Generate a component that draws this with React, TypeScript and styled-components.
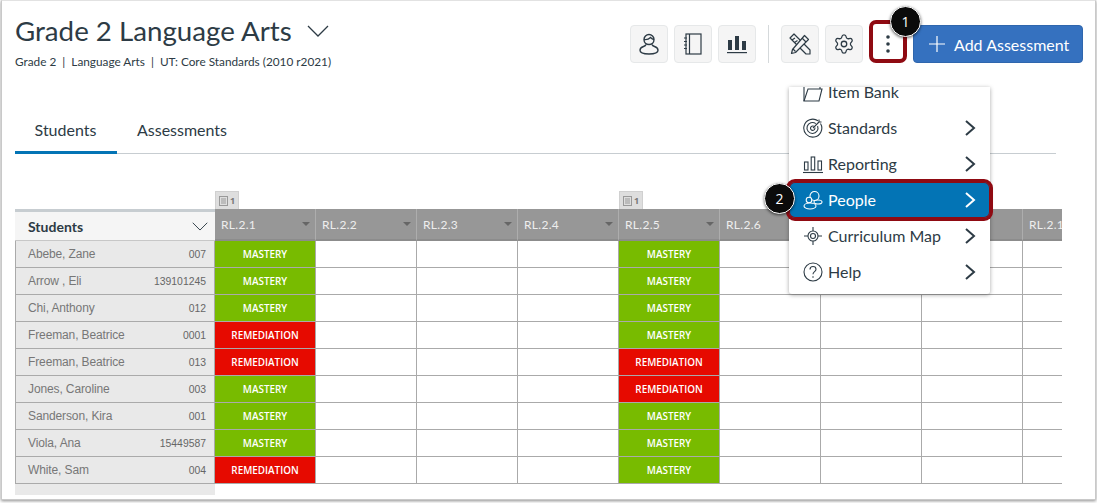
import React from 'react';
import styled, { createGlobalStyle } from 'styled-components';
import { Settings } from 'lucide-react';

const GlobalStyle = createGlobalStyle`
  html, body {
    margin: 0;
    padding: 0;
    background: #fff;
    overflow: hidden;
  }
  body {
    width: 1097px;
    height: 503px;
    font-family: Lato, "Liberation Sans", sans-serif;
  }
`;

const Frame = styled.div`
  position: relative;
  box-sizing: border-box;
  width: 1095px;
  height: 500px;
  margin-left: 1px;
  border: 1px solid #c9c9c9;
  border-top-color: #e2e2e2;
  box-shadow: 0 1px 3px rgba(0, 0, 0, 0.45);
  padding: 0 0 0 13px;
  background: #fff;
  overflow: hidden;
`;

const Header = styled.header`
  display: flex;
  justify-content: space-between;
  align-items: flex-start;
  height: 87px;
`;

const TitleBlock = styled.div`
  padding-top: 13px;
`;

const TitleRow = styled.div`
  display: flex;
  align-items: center;
  gap: 15px;
  height: 34px;
`;

const Title = styled.h1`
  margin: 0;
  font-size: 27.7px;
  font-weight: 400;
  color: #2d3b45;
  line-height: 34px;
`;

const Subtitle = styled.div`
  margin-top: 6px;
  font-size: 11.8px;
  line-height: 15px;
  color: #2d3b45;
  white-space: pre;
`;

const Toolbar = styled.div`
  display: flex;
  align-items: center;
  gap: 6px;
  padding: 24px 12px 0 0;
`;

const IconButton = styled.div`
  box-sizing: border-box;
  width: 38px;
  height: 38px;
  display: flex;
  align-items: center;
  justify-content: center;
  background: #f5f5f5;
  border: 1px solid #e6e8e9;
  border-radius: 4px;
  color: #2d3b45;
`;

const Divider = styled.div`
  width: 1px;
  height: 38px;
  background: #d5d9db;
  margin: 0 6px;
`;

const KebabButton = styled.div`
  box-sizing: border-box;
  width: 38px;
  height: 43px;
  margin-top: -5px;
  display: flex;
  align-items: center;
  justify-content: center;
  padding-top: 5px;
  border: 4px solid #8f0a12;
  border-radius: 7px;
  color: #2d3b45;
`;

const AddButton = styled.div`
  box-sizing: border-box;
  width: 170px;
  height: 38px;
  display: flex;
  align-items: center;
  gap: 9px;
  padding-left: 15px;
  background: #3571bf;
  border: 1px solid #2f66ad;
  border-radius: 4px;
  color: #fff;
  font-size: 16px;
`;

const Tabs = styled.nav`
  display: flex;
  width: 1041px;
  height: 66px;
  box-sizing: border-box;
  border-bottom: 1px solid #c7cdd1;
  align-items: flex-end;
`;

const Tab = styled.div<{ $active?: boolean }>`
  box-sizing: border-box;
  height: 38px;
  width: ${(p) => (p.$active ? '102px' : '131px')};
  margin-bottom: -1px;
  text-align: center;
  font-size: 16px;
  line-height: 22px;
  padding: 3px 1px 0 0;
  color: #2d3b45;
  border-bottom: 3px solid ${(p) => (p.$active ? '#0374b5' : 'transparent')};
`;

const Gradebook = styled.section`
  width: 1047px;
  margin-top: 37px;
  overflow: hidden;
`;

const TagRow = styled.div`
  display: flex;
  height: 18px;
  padding-left: 200px;
`;

const TagSlot = styled.div`
  width: 101px;
  flex: none;
  box-sizing: border-box;
`;

const Tag = styled.div`
  box-sizing: border-box;
  width: 24px;
  height: 18px;
  display: flex;
  align-items: center;
  gap: 2px;
  padding-left: 3px;
  background: #dedede;
  border: 1px solid #d0d0d0;
  border-bottom: 0;
  font-family: "Open Sans", sans-serif;
  font-size: 9px;
  font-weight: 700;
  color: #777;
`;

const Row = styled.div`
  display: flex;
  width: 1100px;
`;

const StudentsHead = styled.div`
  box-sizing: border-box;
  width: 200px;
  height: 32px;
  flex: none;
  display: flex;
  align-items: center;
  justify-content: space-between;
  padding: 1px 7px 0 13px;
  background: #f5f5f5;
  border-top: 3px solid #c7cdd1;
  border-bottom: 1px solid #c7c7c7;
  font-size: 14px;
  font-weight: 700;
  color: #2d3b45;
`;

const ColumnHead = styled.div`
  box-sizing: border-box;
  width: 101px;
  height: 32px;
  flex: none;
  display: flex;
  align-items: center;
  justify-content: space-between;
  padding: 1px 5px 1px 6px;
  background: #979797;
  border-right: 1px solid #adadad;
  border-bottom: 2px solid #8c8c8c;
  font-size: 12px;
  letter-spacing: 0.3px;
  color: #eee;
  white-space: nowrap;
`;

const Caret = styled.span`
  width: 0;
  height: 0;
  border-left: 4px solid transparent;
  border-right: 4px solid transparent;
  border-top: 4px solid #666;
`;

const StudentCell = styled.div`
  box-sizing: border-box;
  width: 200px;
  height: 27px;
  flex: none;
  display: flex;
  align-items: center;
  justify-content: space-between;
  padding: 0 8px 0 12px;
  background: #e9e9e9;
  border-left: 1px solid #aaa;
  border-bottom: 1px solid #aaa;
  border-right: 1px solid #aaa;
  font-family: "Liberation Sans", Arial, sans-serif;
  font-size: 12px;
  letter-spacing: -0.12px;
  color: #777;
`;

const StudentId = styled.span`
  color: #666;
  font-size: 10.4px;
  letter-spacing: 0;
`;

const ScoreCell = styled.div<{ $status?: 'MASTERY' | 'REMEDIATION' }>`
  box-sizing: border-box;
  width: 101px;
  height: 27px;
  flex: none;
  display: flex;
  align-items: center;
  justify-content: center;
  border-right: 1px solid #aaa;
  border-bottom: 1px solid #aaa;
  font-family: "Open Sans", sans-serif;
  font-size: 9.9px;
  font-weight: 600;
  color: #fff;
  background: ${(p) =>
    p.$status === 'MASTERY' ? '#78bb00' : p.$status === 'REMEDIATION' ? '#e60a00' : '#fff'};
`;

const Filler = styled.div`
  width: 200px;
  height: 11px;
  background: #e9e9e9;
`;

const Menu = styled.div`
  position: absolute;
  left: 787px;
  top: 86px;
  width: 201px;
  background: #fff;
  box-shadow: 0 1px 4px rgba(0, 0, 0, 0.35);
  border-radius: 0 0 3px 3px;
  padding-bottom: 4px;
`;

const ClippedItem = styled.div`
  height: 23px;
  overflow: hidden;
`;

const MenuItem = styled.div<{ $selected?: boolean; $clipped?: boolean }>`
  position: relative;
  box-sizing: border-box;
  height: 36px;
  margin-top: ${(p) => (p.$clipped ? '-13px' : '0')};
  display: flex;
  align-items: center;
  gap: 5px;
  padding: 0 14px;
  font-size: 16px;
  color: ${(p) => (p.$selected ? '#fff' : '#2d3b45')};
  background: ${(p) => (p.$selected ? '#0374b5' : 'transparent')};
  border-radius: ${(p) => (p.$selected ? '6px' : '0')};
  box-shadow: ${(p) => (p.$selected ? '0 0 0 3px #8f0a12, inset 0 0 0 1px #8f0a12' : 'none')};
  z-index: ${(p) => (p.$selected ? 1 : 0)};
`;

const MenuLabel = styled.span`
  flex: 1;
  padding-bottom: 2px;
`;

const Badge = styled.div<{ $x: number; $y: number }>`
  position: absolute;
  left: ${(p) => p.$x}px;
  top: ${(p) => p.$y}px;
  box-sizing: border-box;
  width: 31px;
  height: 31px;
  display: flex;
  align-items: center;
  justify-content: center;
  border-radius: 50%;
  background: #0b0b0b;
  border: 1px solid #fff;
  box-shadow: 0 1px 3px rgba(0, 0, 0, 0.6);
  color: #fff;
  font-family: "Open Sans", sans-serif;
  font-size: 14px;
  z-index: 3;
`;

const ChevronDown = ({ size = 22 }: { size?: number }) => (
  <svg width={size} height={size * 0.55} viewBox="0 0 22 12" fill="none" stroke="#2d3b45" strokeWidth="1.3">
    <polyline points="1,1 11,11 21,1" />
  </svg>
);

const ChevronRight = () => (
  <svg width="12" height="16" viewBox="0 0 12 16" fill="none" stroke="currentColor" strokeWidth="2">
    <polyline points="2,1 10,8 2,15" />
  </svg>
);

const PersonIcon = () => (
  <svg width="20" height="22" viewBox="0 0 20 22" fill="none" stroke="currentColor" strokeWidth="1.4">
    <path d="M5 6.500a5 5 0 1 1 10 0c0 3-2.200 5-5 5s-5-2-5-5z" />
    <path d="M5 6.500c3 .5 5-.5 6.500-2 1 1 2.300 1.800 3.500 2" />
    <path d="M7 11.500c-.3 1-1 1.500-2.500 2C2.500 14.200 1 15.500 1 17.300 1 19.500 3.500 21 10 21s9-1.500 9-3.700c0-1.800-1.500-3.100-3.500-3.800-1.500-.5-2.200-1-2.500-2" />
  </svg>
);

const NotebookIcon = () => (
  <svg width="20" height="22" viewBox="0 0 20 22" fill="none" stroke="currentColor" strokeWidth="1.2">
    <rect x="3" y="1" width="15" height="20" />
    <line x1="6.500" y1="1" x2="6.500" y2="21" />
    <path d="M1 5h3M1 8.500h3M1 12h3M1 15.500h3" />
  </svg>
);

const BarsIcon = () => (
  <svg width="20" height="20" viewBox="0 0 20 20" fill="currentColor">
    <rect x="1" y="6" width="4" height="10" />
    <rect x="8" y="2" width="4" height="14" />
    <rect x="15" y="7" width="4" height="9" />
    <rect x="0" y="18" width="20" height="1.200" />
  </svg>
);

const ToolsIcon = () => (
  <svg width="22" height="22" viewBox="0 0 22 22" fill="none" stroke="currentColor" strokeWidth="1.200" strokeLinejoin="round">
    <path d="M1 5l4-4 16 16v4h-4z" />
    <path d="M3 7l3-2M5.500 9.500l3-2M8 12l3-2" />
    <path d="M15.500 2.500l4 4-13 13-4 1 1-4z" fill="#f5f5f5" />
    <path d="M13 5l4 4M4 16l2.500 2.500" />
  </svg>
);

const KebabIcon = () => (
  <svg width="6" height="20" viewBox="0 0 6 20" fill="currentColor">
    <circle cx="3" cy="3" r="1.800" />
    <circle cx="3" cy="10" r="1.800" />
    <circle cx="3" cy="17" r="1.800" />
  </svg>
);

const PlusIcon = () => (
  <svg width="16" height="16" viewBox="0 0 16 16" stroke="#fff" strokeWidth="1.200">
    <path d="M8 0v16M0 8h16" />
  </svg>
);

const NoteIcon = () => (
  <svg width="9" height="10" viewBox="0 0 9 10" fill="none" stroke="#999" strokeWidth="1">
    <rect x="0.500" y="0.500" width="8" height="9" />
    <path d="M2 3h5M2 5h5M2 7h5" />
  </svg>
);

const FolderIcon = () => (
  <svg width="20" height="20" viewBox="0 0 20 20" fill="none" stroke="currentColor" strokeWidth="1.100">
    <path d="M1 19V3h5l1-2h6l1 2h3v4" />
    <path d="M1 19h15l3-12H5z" />
  </svg>
);

const TargetIcon = () => (
  <svg width="20" height="20" viewBox="0 0 20 20" fill="none" stroke="currentColor" strokeWidth="1.100">
    <path d="M15 2.800A9 9 0 1 0 17.500 5.500" />
    <path d="M12.800 5.600A5.500 5.500 0 1 0 14.600 8" />
    <path d="M10.800 8.300A2.200 2.200 0 1 0 11.800 9.500" />
    <path d="M10 10l6-6M16 4V1.500M16 4h2.500" />
  </svg>
);

const ReportingIcon = () => (
  <svg width="20" height="20" viewBox="0 0 20 20" fill="none" stroke="currentColor" strokeWidth="1.100">
    <rect x="1.500" y="8" width="3.500" height="8" />
    <rect x="8.200" y="3" width="3.500" height="13" />
    <rect x="15" y="7" width="3.500" height="9" />
    <path d="M0 18.500h20" />
  </svg>
);

const PeopleIcon = () => (
  <svg width="20" height="20" viewBox="0 0 20 20" fill="none" stroke="currentColor" strokeWidth="1.100">
    <circle cx="11.500" cy="6" r="4.500" />
    <ellipse cx="15" cy="12" rx="4" ry="2" />
    <circle cx="6" cy="10" r="2.800" fill="#0374b5" />
    <ellipse cx="7" cy="16" rx="6" ry="3" fill="#0374b5" />
  </svg>
);

const CompassIcon = () => (
  <svg width="20" height="20" viewBox="0 0 20 20" fill="none" stroke="currentColor" strokeWidth="1.100">
    <circle cx="10" cy="10" r="5" />
    <circle cx="10" cy="10" r="2.500" />
    <path d="M10 1v4M10 15v4M1 10h4M15 10h4" />
  </svg>
);

const HelpIcon = () => (
  <svg width="20" height="20" viewBox="0 0 20 20" fill="none" stroke="currentColor" strokeWidth="1.100">
    <circle cx="10" cy="10" r="9" />
    <path d="M7 7.500c0-1.800 1.400-3 3-3s3 1.200 3 2.800c0 2.400-3 2.400-3 5" />
    <circle cx="10" cy="15" r="0.800" fill="currentColor" stroke="none" />
  </svg>
);

type Status = 'MASTERY' | 'REMEDIATION';
const M: Status = 'MASTERY';
const R: Status = 'REMEDIATION';

// labels of the two columns behind the menu stay empty, they can't be seen anyway
const columns = ['RL.2.1', 'RL.2.2', 'RL.2.3', 'RL.2.4', 'RL.2.5', 'RL.2.6', '', '', 'RL.2.1'];

const students: { name: string; id: string; first: Status; fifth: Status }[] = [
  { name: 'Abebe, Zane', id: '007', first: M, fifth: M },
  { name: 'Arrow , Eli', id: '139101245', first: M, fifth: M },
  { name: 'Chi, Anthony', id: '012', first: M, fifth: M },
  { name: 'Freeman, Beatrice', id: '0001', first: R, fifth: M },
  { name: 'Freeman, Beatrice', id: '013', first: R, fifth: R },
  { name: 'Jones, Caroline', id: '003', first: M, fifth: R },
  { name: 'Sanderson, Kira', id: '001', first: M, fifth: M },
  { name: 'Viola, Ana', id: '15449587', first: M, fifth: M },
  { name: 'White, Sam', id: '004', first: R, fifth: M },
];

const App: React.FC = () => (
  <>
    <GlobalStyle />
    <Frame>
      <Header>
        <TitleBlock>
          <TitleRow>
            <Title>Grade 2 Language Arts</Title>
            <ChevronDown />
          </TitleRow>
          <Subtitle>Grade 2  |  Language Arts  |  UT: Core Standards (2010 r2021)</Subtitle>
        </TitleBlock>
        <Toolbar>
          <IconButton><PersonIcon /></IconButton>
          <IconButton><NotebookIcon /></IconButton>
          <IconButton><BarsIcon /></IconButton>
          <Divider />
          <IconButton><ToolsIcon /></IconButton>
          <IconButton><Settings size={22} strokeWidth={1.4} /></IconButton>
          <KebabButton><KebabIcon /></KebabButton>
          <AddButton><PlusIcon />Add Assessment</AddButton>
        </Toolbar>
      </Header>

      <Tabs>
        <Tab $active>Students</Tab>
        <Tab>Assessments</Tab>
      </Tabs>

      <Gradebook>
        <TagRow>
          {columns.map((col, i) => (
            <TagSlot key={i}>
              {(i === 0 || i === 4) && <Tag><NoteIcon />1</Tag>}
            </TagSlot>
          ))}
        </TagRow>
        <Row>
          <StudentsHead>Students<ChevronDown size={16} /></StudentsHead>
          {columns.map((col, i) => (
            <ColumnHead key={i}>{col}<Caret /></ColumnHead>
          ))}
        </Row>
        {students.map((s, r) => (
          <Row key={r}>
            <StudentCell>{s.name}<StudentId>{s.id}</StudentId></StudentCell>
            {columns.map((col, i) => {
              const status = i === 0 ? s.first : i === 4 ? s.fifth : undefined;
              return <ScoreCell key={i} $status={status}>{status}</ScoreCell>;
            })}
          </Row>
        ))}
        <Filler />
      </Gradebook>

      <Menu>
        <ClippedItem>
          <MenuItem $clipped><FolderIcon /><MenuLabel>Item Bank</MenuLabel></MenuItem>
        </ClippedItem>
        <MenuItem><TargetIcon /><MenuLabel>Standards</MenuLabel><ChevronRight /></MenuItem>
        <MenuItem><ReportingIcon /><MenuLabel>Reporting</MenuLabel><ChevronRight /></MenuItem>
        <MenuItem $selected><PeopleIcon /><MenuLabel>People</MenuLabel><ChevronRight /></MenuItem>
        <MenuItem><CompassIcon /><MenuLabel>Curriculum Map</MenuLabel><ChevronRight /></MenuItem>
        <MenuItem><HelpIcon /><MenuLabel>Help</MenuLabel><ChevronRight /></MenuItem>
      </Menu>

      <Badge $x={888} $y={5}>1</Badge>
      <Badge $x={762} $y={182}>2</Badge>
    </Frame>
  </>
);

export default App;
